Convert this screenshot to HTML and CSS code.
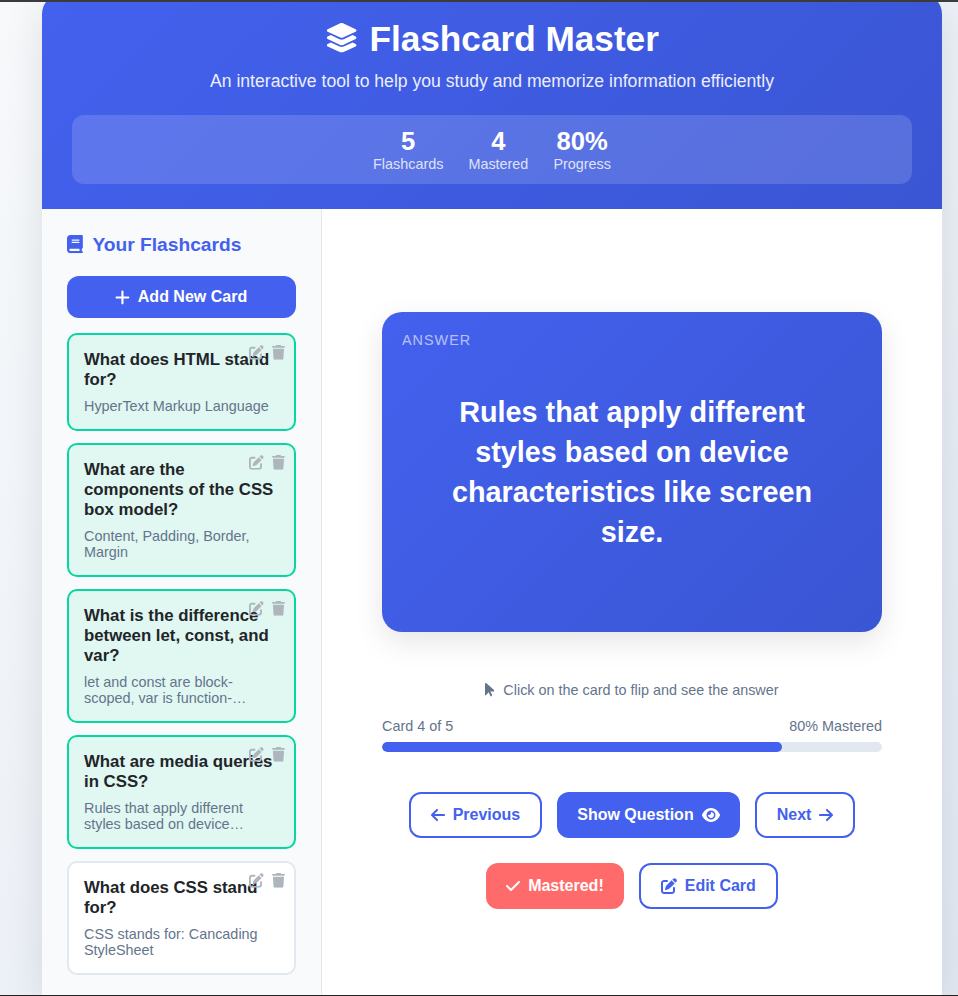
FILE: index.html
```html
<!DOCTYPE html>
<html lang="en">
<head>
<meta charset="utf-8">
<title>Flashcard Master</title>
<link rel="stylesheet" href="styles.css">
</head>
<body>
<svg class="sprite" aria-hidden="true">
  <symbol id="layers" viewBox="0 0 576 512"><path d="M264.5 5.2c14.9-6.9 32.1-6.9 47 0l218.6 101c8.5 3.9 13.9 12.4 13.9 21.8s-5.4 17.9-13.9 21.8l-218.6 101c-14.9 6.9-32.1 6.9-47 0L45.9 149.8C37.4 145.8 32 137.3 32 128s5.4-17.9 13.9-21.8L264.5 5.2zM476.9 209.6l53.2 24.6c8.5 3.9 13.9 12.4 13.9 21.8s-5.4 17.9-13.9 21.8l-218.6 101c-14.9 6.9-32.1 6.9-47 0L45.9 277.8C37.4 273.8 32 265.3 32 256s5.4-17.9 13.9-21.8l53.2-24.6 152 70.2c23.4 10.8 50.4 10.8 73.8 0l152-70.2zm-152 198.2l152-70.2 53.2 24.6c8.5 3.9 13.9 12.4 13.9 21.8s-5.4 17.9-13.9 21.8l-218.6 101c-14.9 6.9-32.1 6.9-47 0L45.9 405.8C37.4 401.8 32 393.3 32 384s5.4-17.9 13.9-21.8l53.2-24.6 152 70.2c23.4 10.8 50.4 10.8 73.8 0z"/></symbol>
  <symbol id="book" viewBox="0 0 448 512"><path d="M96 0C43 0 0 43 0 96V416c0 53 43 96 96 96H384h32c17.7 0 32-14.3 32-32s-14.3-32-32-32V384c17.7 0 32-14.3 32-32V32c0-17.7-14.3-32-32-32H384 96zm0 384H352v64H96c-17.7 0-32-14.3-32-32s14.3-32 32-32zm32-240c0-8.8 7.2-16 16-16H336c8.8 0 16 7.2 16 16s-7.2 16-16 16H144c-8.8 0-16-7.2-16-16zm16 48H336c8.8 0 16 7.2 16 16s-7.2 16-16 16H144c-8.8 0-16-7.2-16-16s7.2-16 16-16z"/></symbol>
  <symbol id="plus" viewBox="0 0 448 512"><path d="M256 80c0-17.7-14.3-32-32-32s-32 14.3-32 32V224H48c-17.7 0-32 14.3-32 32s14.3 32 32 32H192V432c0 17.7 14.3 32 32 32s32-14.3 32-32V288H400c17.7 0 32-14.3 32-32s-14.3-32-32-32H256V80z"/></symbol>
  <symbol id="edit" viewBox="0 0 512 512"><path d="M471.6 21.7c-21.9-21.9-57.3-21.9-79.2 0L362.3 51.7l97.9 97.9 30.1-30.1c21.9-21.9 21.9-57.3 0-79.2L471.6 21.7zm-299.2 220c-6.1 6.1-10.8 13.6-13.5 21.9l-29.6 88.8c-2.9 8.6-.6 18.1 5.8 24.6s15.9 8.7 24.6 5.8l88.8-29.6c8.2-2.7 15.7-7.4 21.9-13.5L437.7 172.3 339.7 74.3 172.4 241.7zM96 64C43 64 0 107 0 160V416c0 53 43 96 96 96H352c53 0 96-43 96-96V320c0-17.7-14.3-32-32-32s-32 14.3-32 32v96c0 17.7-14.3 32-32 32H96c-17.7 0-32-14.3-32-32V160c0-17.7 14.3-32 32-32h96c17.7 0 32-14.3 32-32s-14.3-32-32-32H96z"/></symbol>
  <symbol id="trash" viewBox="0 0 448 512"><path d="M135.2 17.7L128 32H32C14.3 32 0 46.3 0 64S14.3 96 32 96H416c17.7 0 32-14.3 32-32s-14.3-32-32-32H320l-7.2-14.3C307.4 6.8 296.3 0 284.2 0H163.8c-12.1 0-23.2 6.8-28.6 17.7zM416 128H32L53.2 467c1.6 25.3 22.6 45 47.9 45H346.9c25.3 0 46.3-19.7 47.9-45L416 128z"/></symbol>
  <symbol id="pointer" viewBox="0 0 320 512"><path d="M0 55.2V426c0 12.2 9.9 22 22 22c6.3 0 12.4-2.7 16.6-7.5L121.2 346l58.1 116.3c7.9 15.8 27.1 22.2 42.9 14.3s22.2-27.1 14.3-42.9L179.8 320H297.9c12.2 0 22.1-9.9 22.1-22.1c0-6.3-2.7-12.3-7.4-16.5L38.6 37.9C34.3 34.1 28.9 32 23.2 32C10.4 32 0 42.4 0 55.2z"/></symbol>
  <symbol id="left" viewBox="0 0 448 512"><path d="M9.4 233.4c-12.5 12.5-12.5 32.8 0 45.3l160 160c12.5 12.5 32.8 12.5 45.3 0s12.5-32.8 0-45.3L109.2 288 416 288c17.7 0 32-14.3 32-32s-14.3-32-32-32l-306.7 0L214.6 118.6c12.5-12.5 12.5-32.8 0-45.3s-32.8-12.5-45.3 0l-160 160z"/></symbol>
  <symbol id="right" viewBox="0 0 448 512"><path d="M438.6 278.6c12.5-12.5 12.5-32.8 0-45.3l-160-160c-12.5-12.5-32.8-12.5-45.3 0s-12.5 32.8 0 45.3L338.8 224 32 224c-17.7 0-32 14.3-32 32s14.3 32 32 32l306.7 0L233.4 393.4c-12.5 12.5-12.5 32.8 0 45.3s32.8 12.5 45.3 0l160-160z"/></symbol>
  <symbol id="eye" viewBox="0 0 576 512"><path d="M288 32c-80.8 0-145.5 36.8-192.6 80.6C48.6 156 17.3 208 2.5 243.7c-3.3 7.9-3.3 16.7 0 24.6C17.3 304 48.6 356 95.4 399.4C142.5 443.2 207.2 480 288 480s145.5-36.8 192.6-80.6c46.8-43.5 78.1-95.4 93-131.1c3.3-7.9 3.3-16.7 0-24.6c-14.9-35.7-46.2-87.7-93-131.1C433.5 68.8 368.8 32 288 32zM144 256a144 144 0 1 1 288 0 144 144 0 1 1 -288 0zm144-64c0 35.3-28.7 64-64 64c-7.1 0-13.9-1.2-20.3-3.3c-5.5-1.8-11.9 1.6-11.7 7.4c.3 6.9 1.3 13.8 3.2 20.7c13.7 51.2 66.4 81.6 117.6 67.9s81.6-66.4 67.9-117.6c-11.1-41.5-47.8-69.4-88.6-71.1c-5.8-.2-9.2 6.1-7.4 11.7c2.1 6.4 3.3 13.2 3.3 20.3z"/></symbol>
  <symbol id="check" viewBox="0 0 448 512"><path d="M438.6 105.4c12.5 12.5 12.5 32.8 0 45.3l-256 256c-12.5 12.5-32.8 12.5-45.3 0l-128-128c-12.5-12.5-12.5-32.8 0-45.3s32.8-12.5 45.3 0L160 338.7 393.4 105.4c12.5-12.5 32.8-12.5 45.3 0z"/></symbol>
</svg>

<div class="container">
  <header class="header">
    <h1><svg class="icon wide"><use href="#layers"/></svg><span>Flashcard Master</span></h1>
    <p class="tagline">An interactive tool to help you study and memorize information efficiently</p>
    <div class="stats">
      <div class="stat"><div class="stat-value">5</div><div class="stat-label">Flashcards</div></div>
      <div class="stat"><div class="stat-value">4</div><div class="stat-label">Mastered</div></div>
      <div class="stat"><div class="stat-value">80%</div><div class="stat-label">Progress</div></div>
    </div>
  </header>

  <div class="content">
    <aside class="sidebar">
      <h2><svg class="icon"><use href="#book"/></svg><span>Your Flashcards</span></h2>
      <button class="btn btn-primary add-btn"><svg class="icon"><use href="#plus"/></svg>Add New Card</button>
      <ul class="card-list">
        <li class="card-item mastered">
          <div class="question">What does HTML stand for?</div>
          <div class="preview">HyperText Markup Language</div>
          <div class="actions"><svg class="icon square"><use href="#edit"/></svg><svg class="icon"><use href="#trash"/></svg></div>
        </li>
        <li class="card-item mastered">
          <div class="question">What are the components of the CSS box model?</div>
          <div class="preview">Content, Padding, Border, Margin</div>
          <div class="actions"><svg class="icon square"><use href="#edit"/></svg><svg class="icon"><use href="#trash"/></svg></div>
        </li>
        <li class="card-item mastered">
          <div class="question">What is the difference between let, const, and var?</div>
          <div class="preview">let and const are block-scoped, var is function-…</div>
          <div class="actions"><svg class="icon square"><use href="#edit"/></svg><svg class="icon"><use href="#trash"/></svg></div>
        </li>
        <li class="card-item mastered">
          <div class="question">What are media queries in CSS?</div>
          <div class="preview">Rules that apply different styles based on device…</div>
          <div class="actions"><svg class="icon square"><use href="#edit"/></svg><svg class="icon"><use href="#trash"/></svg></div>
        </li>
        <li class="card-item">
          <div class="question">What does CSS stand for?</div>
          <div class="preview">CSS stands for: Cancading StyleSheet</div>
          <div class="actions"><svg class="icon square"><use href="#edit"/></svg><svg class="icon"><use href="#trash"/></svg></div>
        </li>
      </ul>
    </aside>

    <main class="study">
      <div class="flashcard">
        <div class="side-label">ANSWER</div>
        <div class="flashcard-text">Rules that apply different styles based on device characteristics like screen size.</div>
      </div>
      <div class="hint"><svg class="icon narrow"><use href="#pointer"/></svg>Click on the card to flip and see the answer</div>
      <div class="progress-info"><span>Card 4 of 5</span><span>80% Mastered</span></div>
      <div class="progress-track"><div class="progress-fill" style="width: 80%"></div></div>
      <div class="controls">
        <button class="btn btn-outline"><svg class="icon"><use href="#left"/></svg>Previous</button>
        <button class="btn btn-primary">Show Question<svg class="icon wide"><use href="#eye"/></svg></button>
        <button class="btn btn-outline">Next<svg class="icon"><use href="#right"/></svg></button>
      </div>
      <div class="controls secondary">
        <button class="btn btn-accent"><svg class="icon"><use href="#check"/></svg>Mastered!</button>
        <button class="btn btn-outline"><svg class="icon square"><use href="#edit"/></svg>Edit Card</button>
      </div>
    </main>
  </div>
</div>
</body>
</html>
```
FILE: styles.css
```css
* {
  box-sizing: border-box;
  margin: 0;
  padding: 0;
}

body {
  height: 996px;
  overflow: hidden;
  border-top: 2px solid #3b3b3b;
  border-bottom: 1px solid #222;
  background: linear-gradient(135deg, #f7f9fb 0%, #e2e9f3 100%);
  color: #212529;
  font-family: "Liberation Sans", Arial, sans-serif;
}

.sprite {
  display: none;
}

.icon {
  width: 0.875em;
  height: 1em;
  flex: none;
  fill: currentColor;
}

.icon.wide { width: 1.125em; }
.icon.square { width: 1em; }
.icon.narrow { width: 0.625em; }

.container {
  width: 900px;
  height: 1001px;
  margin: -8px 0 0 42px;
  border-radius: 20px 20px 0 0;
  overflow: hidden;
  background: #fff;
  box-shadow: 0 10px 40px rgba(0, 0, 0, 0.1);
}

.header {
  height: 215px;
  padding: 25px 30px;
  background: linear-gradient(135deg, #4361ee, #3a56d4);
  color: #fff;
  text-align: center;
}

h1 {
  display: flex;
  align-items: center;
  justify-content: center;
  gap: 11px;
  font-size: 35.2px;
  line-height: 40px;
}

h1 .icon {
  margin-bottom: 2px;
  font-size: 29.6px;
}

.tagline {
  margin: 12px 0 24px;
  font-size: 17.6px;
  line-height: 20px;
  opacity: 0.9;
}

.stats {
  display: flex;
  justify-content: center;
  gap: 25px;
  padding: 12px;
  border-radius: 12px;
  background: rgba(255, 255, 255, 0.15);
}

.stat-value {
  font-size: 25.6px;
  font-weight: 700;
  line-height: 29px;
}

.stat-label {
  font-size: 14.4px;
  line-height: 16px;
  opacity: 0.8;
}

.content {
  display: flex;
  height: 786px;
}

.sidebar {
  width: 280px;
  padding: 25px 25px 0;
  border-right: 1px solid #e2e8f0;
  background: #f8fafc;
}

h2 {
  display: flex;
  align-items: center;
  gap: 9.5px;
  margin-bottom: 20px;
  color: #4361ee;
  font-size: 19.2px;
  line-height: 22px;
}

h2 .icon {
  margin-bottom: 1px;
  font-size: 18.2px;
}

.btn {
  display: flex;
  align-items: center;
  justify-content: center;
  gap: 8px;
  padding: 12px 20px;
  border: none;
  border-radius: 12px;
  font: 700 16px/18px "Liberation Sans", Arial, sans-serif;
}

.btn-primary {
  background: #4361ee;
  color: #fff;
}

.btn-outline {
  border: 2px solid #4361ee;
  background: #fff;
  color: #4361ee;
}

.btn-accent {
  background: #ff6b6b;
  color: #fff;
}

.add-btn {
  width: 100%;
  margin-bottom: 15px;
}

.add-btn .icon {
  margin-left: -0.9px;
  font-size: 17px;
}

.card-list {
  display: flex;
  flex-direction: column;
  gap: 12px;
  list-style: none;
}

.card-item {
  position: relative;
  padding: 15px;
  border: 2px solid #e2e8f0;
  border-radius: 10px;
  background: #fff;
}

.card-item.mastered {
  border-color: #06d6a0;
  background: #e1f7f1;
}

.question {
  margin-bottom: 8px;
  font-size: 16.8px;
  font-weight: 700;
  line-height: 20px;
}

.preview {
  color: #64748b;
  font-size: 14.4px;
  line-height: 16px;
}

.actions {
  position: absolute;
  top: 10px;
  right: 9.5px;
  display: flex;
  gap: 8px;
  color: #adb5bd;
  font-size: 14.8px;
}

.study {
  display: flex;
  flex: 1;
  flex-direction: column;
  padding: 103px 60px 0;
}

.flashcard {
  position: relative;
  display: flex;
  align-items: center;
  justify-content: center;
  height: 320px;
  padding: 40px;
  border-radius: 20px;
  background: linear-gradient(135deg, #4361ee, #3a56d4);
  box-shadow: 0 10px 30px rgba(0, 0, 0, 0.1);
  color: #fff;
}

.side-label {
  position: absolute;
  top: 20px;
  left: 20px;
  font-size: 14.4px;
  line-height: 16px;
  letter-spacing: 1px;
  opacity: 0.6;
}

.flashcard-text {
  font-size: 28.8px;
  font-weight: 700;
  line-height: 40px;
  text-align: center;
}

.hint {
  display: flex;
  align-items: center;
  justify-content: center;
  gap: 8.4px;
  margin-top: 50px;
  color: #64748b;
  font-size: 14.4px;
  line-height: 16px;
}

.hint .icon {
  font-size: 15.2px;
}

.progress-info {
  display: flex;
  justify-content: space-between;
  margin: 20px 0 8px;
  color: #64748b;
  font-size: 14.4px;
  line-height: 16px;
}

.progress-track {
  height: 10px;
  overflow: hidden;
  border-radius: 5px;
  background: #e2e8f0;
}

.progress-fill {
  height: 100%;
  border-radius: 5px;
  background: #4361ee;
}

.controls {
  display: flex;
  justify-content: center;
  gap: 15px;
  margin-top: 40px;
}

.controls.secondary {
  margin-top: 25px;
}
```
